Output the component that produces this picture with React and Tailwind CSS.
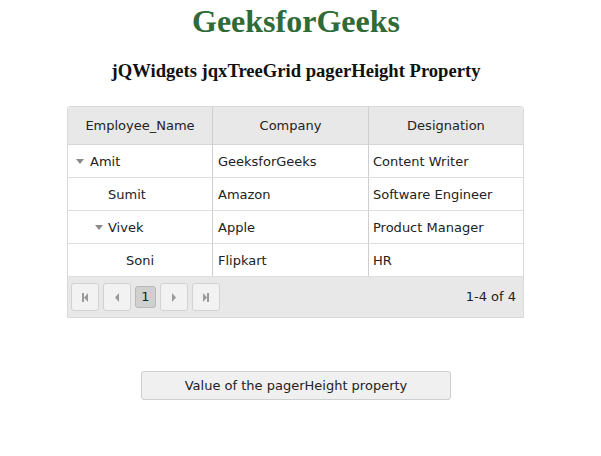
const rows = [
  { name: 'Amit', company: 'GeeksforGeeks', role: 'Content Writer', level: 0, toggle: true },
  { name: 'Sumit', company: 'Amazon', role: 'Software Engineer', level: 1 },
  { name: 'Vivek', company: 'Apple', role: 'Product Manager', level: 1, toggle: true },
  { name: 'Soni', company: 'Flipkart', role: 'HR', level: 2 },
];

const Caret = () => (
  <svg width="8" height="5" viewBox="0 0 8 5" className="shrink-0">
    <path d="M0 0 L8 0 L4 5 Z" fill="#8a8a8a" />
  </svg>
);

const PagerIcon = ({ type }) => (
  <svg width="8" height="9" viewBox="0 0 8 9">
    {type === 'first' && (
      <>
        <rect x="1" y="0" width="2" height="9" fill="#9a9a9a" />
        <path d="M7 0 L3 4.5 L7 9 Z" fill="#9a9a9a" />
      </>
    )}
    {type === 'prev' && <path d="M6 0 L2 4.5 L6 9 Z" fill="#9a9a9a" />}
    {type === 'next' && <path d="M2 0 L6 4.5 L2 9 Z" fill="#9a9a9a" />}
    {type === 'last' && (
      <>
        <path d="M1 0 L5 4.5 L1 9 Z" fill="#9a9a9a" />
        <rect x="5" y="0" width="2" height="9" fill="#9a9a9a" />
      </>
    )}
  </svg>
);

const PagerButton = ({ type }) => (
  <div className="w-[28px] h-[28px] flex items-center justify-center border border-[#d2d2d2] rounded-[3px] bg-[#f2f2f2]">
    <PagerIcon type={type} />
  </div>
);

export default function App() {
  return (
    <div className="w-[592px] bg-white text-[#222] font-['DejaVu_Sans',Verdana,sans-serif]">
      <h1 className="text-center pt-[3px] text-[32px] leading-[36px] font-bold text-[#2f6a37] font-['Liberation_Serif',serif]">
        GeeksforGeeks
      </h1>
      <h3 className="text-center mt-[20px] text-[18.6px] leading-[24px] font-bold text-[#111] font-['Liberation_Serif',serif]">
        jQWidgets jqxTreeGrid pagerHeight Property
      </h3>

      <div className="ml-[67px] mt-[23px] w-[457px] border border-[#d9d9d9] rounded-t-[3px] text-[13px]">
        <div className="grid grid-cols-[145px_156px_1fr] h-[38px] bg-[#e8e8e8] border-b border-[#d6d6d6] rounded-t-[3px]">
          <div className="flex items-center justify-center border-r border-[#cfcfcf]">Employee_Name</div>
          <div className="flex items-center justify-center border-r border-[#cfcfcf]">Company</div>
          <div className="flex items-center justify-center">Designation</div>
        </div>
        {rows.map((r) => (
          <div key={r.name} className="grid grid-cols-[145px_156px_1fr] h-[33px] border-b border-[#dedede]">
            <div className="flex items-center pt-[1px] border-r border-[#cfcfcf]">
              <div
                className={
                  r.level === 0 ? 'w-[22px] pl-[8px]' : r.level === 1 ? 'w-[40px] pl-[27px]' : 'w-[58px]'
                }
              >
                {r.toggle && <Caret />}
              </div>
              <span>{r.name}</span>
            </div>
            <div className="flex items-center pt-[1px] pl-[5px] border-r border-[#cfcfcf]">{r.company}</div>
            <div className="flex items-center pt-[1px] pl-[4px]">{r.role}</div>
          </div>
        ))}
        <div className="h-[40px] bg-[#e8e8e8] flex items-center pl-[3px] pr-[7px]">
          <div className="flex items-center gap-[4px]">
            <PagerButton type="first" />
            <PagerButton type="prev" />
            <div className="w-[21px] h-[22px] flex items-center justify-center border border-[#b8b8b8] rounded-[3px] bg-[#d0d0d0] text-[13px]">
              1
            </div>
            <PagerButton type="next" />
            <PagerButton type="last" />
          </div>
          <div className="ml-auto">1-4 of 4</div>
        </div>
      </div>

      <div className="mt-[53px] flex">
        <button className="ml-[141px] w-[310px] h-[29px] border border-[#cfcfcf] rounded-[3px] bg-[#f0f0f0] text-[13px] text-[#222]">
          Value of the pagerHeight property
        </button>
      </div>
      <div className="h-[56px]" />
    </div>
  );
}
